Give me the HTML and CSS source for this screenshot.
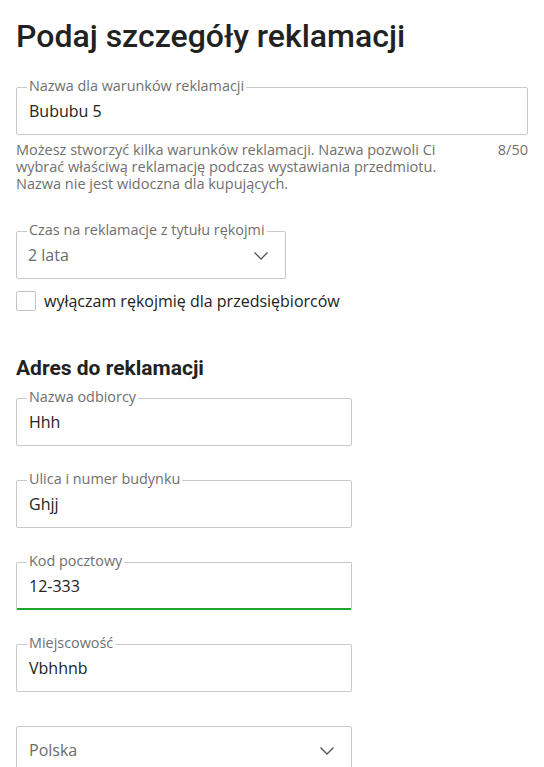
FILE: index.html
```html
<!DOCTYPE html>
<html lang="pl">
<head>
<meta charset="utf-8">
<link rel="stylesheet" href="styles.css">
</head>
<body>
<h1 class="title">Podaj szczegóły reklamacji</h1>

<div class="field field-wide">
  <span class="field-label">Nazwa dla warunków reklamacji</span>
  <span class="field-value">Bububu 5</span>
</div>
<div class="helper">
  <p class="helper-text">Możesz stworzyć kilka warunków reklamacji. Nazwa pozwoli Ci wybrać właściwą reklamację podczas wystawiania przedmiotu. Nazwa nie jest widoczna dla kupujących.</p>
  <span class="helper-count">8/50</span>
</div>

<div class="field field-narrow field-select">
  <span class="field-label">Czas na reklamacje z tytułu rękojmi</span>
  <span class="field-value muted">2 lata</span>
  <svg class="chevron" width="16" height="10" viewBox="0 0 16 10"><path d="M1.5 1.5 L8 8 L14.5 1.5" fill="none" stroke="#555" stroke-width="1.3"/></svg>
</div>

<label class="check">
  <span class="check-box"></span>
  <span class="check-text">wyłączam rękojmię dla przedsiębiorców</span>
</label>

<h2 class="section">Adres do reklamacji</h2>

<div class="field field-mid">
  <span class="field-label">Nazwa odbiorcy</span>
  <span class="field-value">Hhh</span>
</div>

<div class="field field-mid gap">
  <span class="field-label">Ulica i numer budynku</span>
  <span class="field-value">Ghjj</span>
</div>

<div class="field field-mid gap valid">
  <span class="field-label">Kod pocztowy</span>
  <span class="field-value">12-333</span>
</div>

<div class="field field-mid gap">
  <span class="field-label">Miejscowość</span>
  <span class="field-value">Vbhhnb</span>
</div>

<div class="field field-mid gap">
  <span class="field-value muted">Polska</span>
  <svg class="chevron" width="16" height="10" viewBox="0 0 16 10"><path d="M1.5 1.5 L8 8 L14.5 1.5" fill="none" stroke="#555" stroke-width="1.3"/></svg>
</div>
</body>
</html>
```

FILE: styles.css
```css
* { box-sizing: border-box; }
html, body { margin: 0; background: #fff; }
body {
  padding: 0 16px;
  font-family: "Open Sans", "Liberation Sans", sans-serif;
  color: #222;
  overflow: hidden;
  height: 767px;
}
.title {
  font-family: Roboto, "Liberation Sans", sans-serif;
  font-weight: 500;
  font-size: 32px;
  line-height: 40px;
  margin: 16px 0 31px;
  color: #222;
}
.field {
  position: relative;
  height: 48px;
  border: 1px solid #c8c8c8;
  border-radius: 2px;
  display: flex;
  align-items: center;
  padding: 0 12px;
}
.field-wide { width: 512px; }
.field-narrow { width: 270px; }
.field-mid { width: 336px; }
.gap { margin-top: 34px; }
.field-label {
  position: absolute;
  top: -10px;
  left: 10px;
  padding: 0 2px;
  background: #fff;
  font-size: 14.4px;
  line-height: 16px;
  color: #6f6f6f;
  white-space: nowrap;
}
.field-value {
  font-size: 16px;
  line-height: 24px;
}
.field-select .field-value { padding-left: 0; }
.muted { color: #6a6a6a; }
.valid { border-bottom: 2px solid #1fa52c; }
.chevron {
  position: absolute;
  right: 16px;
  top: 19px;
}
.helper {
  display: flex;
  justify-content: space-between;
  align-items: flex-start;
  margin-top: 6px;
  width: 512px;
  font-size: 14.5px;
  line-height: 17px;
  color: #707070;
}
.helper-text { margin: 0; width: 445px; }
.field-select { margin-top: 39px; }
.field-select .field-value { margin-left: -1px; }
.check {
  display: flex;
  align-items: center;
  gap: 8px;
  margin-top: 12px;
}
.check-box {
  width: 20px;
  height: 20px;
  border: 1px solid #c4c4c4;
  border-radius: 2px;
  flex: none;
}
.check-text {
  font-size: 16px;
  line-height: 20px;
  color: #222;
}
.section {
  font-family: Roboto, "Liberation Sans", sans-serif;
  font-weight: 700;
  font-size: 21px;
  line-height: 24px;
  margin: 45px 0 18px;
  color: #222;
}
```
